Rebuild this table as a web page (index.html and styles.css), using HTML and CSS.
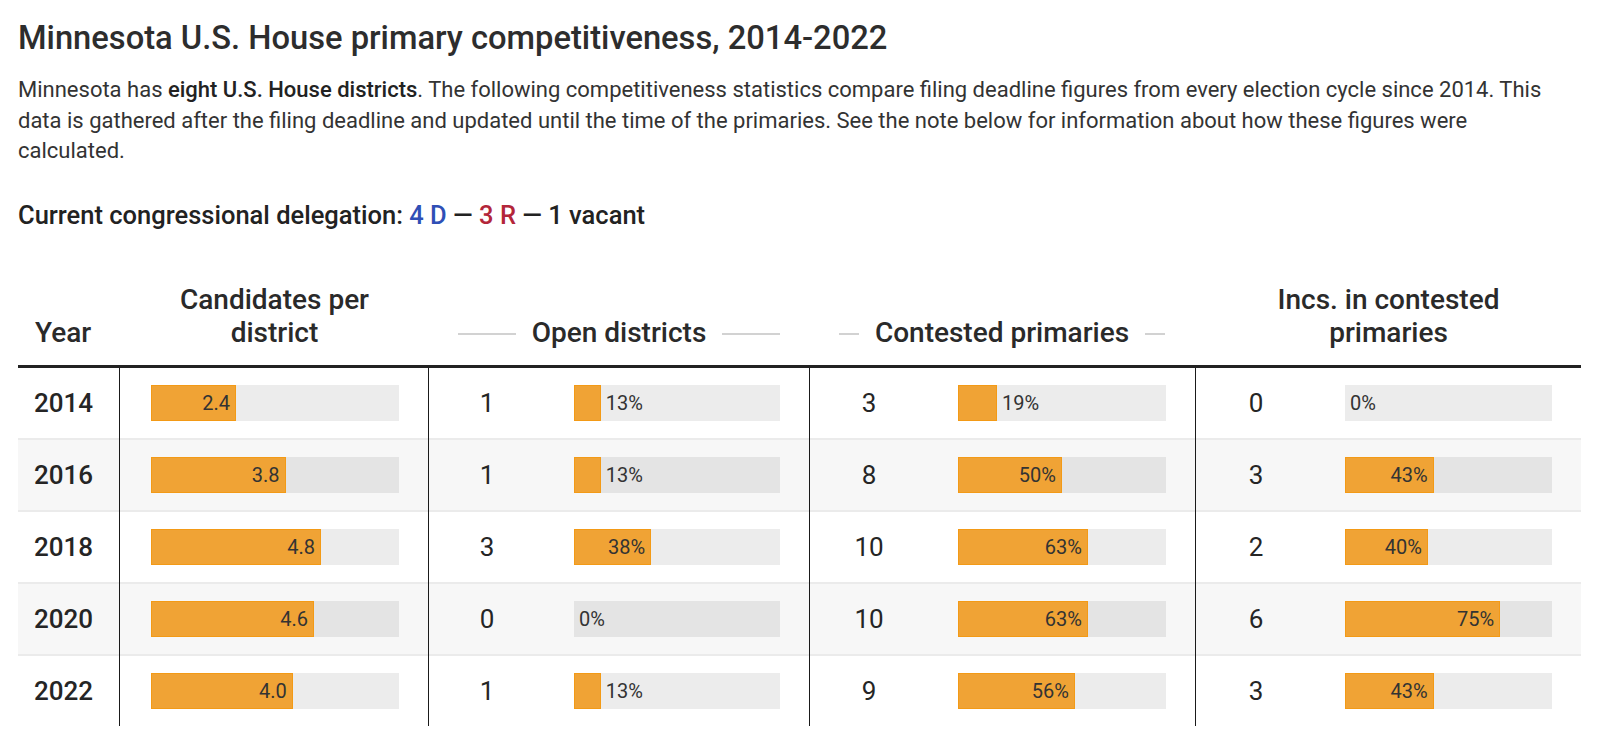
FILE: index.html
```html
<!DOCTYPE html>
<html lang="en">
<head>
<meta charset="utf-8">
<title>Minnesota U.S. House primary competitiveness</title>
<link rel="stylesheet" href="styles.css">
</head>
<body>
<main class="page">
  <h1 class="title">Minnesota U.S. House primary competitiveness, 2014-2022</h1>
  <p class="intro">Minnesota has <strong>eight U.S. House districts</strong>. The following competitiveness statistics compare filing deadline figures from every election cycle since 2014. This data is gathered after the filing deadline and updated until the time of the primaries. See the note below for information about how these figures were calculated.</p>
  <p class="delegation">Current congressional delegation: <span class="dem">4 D</span> — <span class="rep">3 R</span> — 1 vacant</p>

  <div class="table">
    <div class="thead">
      <div class="th th-year">Year</div>
      <div class="th th-center">Candidates per<br>district</div>
      <div class="th th-group th-open"><span class="rule"></span><span class="th-label">Open districts</span><span class="rule"></span></div>
      <div class="th th-group th-contested"><span class="rule"></span><span class="th-label">Contested primaries</span><span class="rule"></span></div>
      <div class="th th-center th-incs">Incs. in contested<br>primaries</div>
    </div>

    <div class="row">
      <div class="cell year">2014</div>
      <div class="cell bar-cell bar-cand"><div class="track"><div class="fill" style="width:34.29%"><span class="lbl">2.4</span></div></div></div>
      <div class="cell num">1</div>
      <div class="cell bar-cell bar-open"><div class="track"><div class="fill" style="width:13%"></div><span class="lbl out">13%</span></div></div>
      <div class="cell num">3</div>
      <div class="cell bar-cell bar-cont"><div class="track"><div class="fill" style="width:18.75%"></div><span class="lbl out">19%</span></div></div>
      <div class="cell num">0</div>
      <div class="cell bar-cell bar-incs last"><div class="track"><span class="lbl out">0%</span></div></div>
    </div>

    <div class="row alt">
      <div class="cell year">2016</div>
      <div class="cell bar-cell bar-cand"><div class="track"><div class="fill" style="width:54.29%"><span class="lbl">3.8</span></div></div></div>
      <div class="cell num">1</div>
      <div class="cell bar-cell bar-open"><div class="track"><div class="fill" style="width:13%"></div><span class="lbl out">13%</span></div></div>
      <div class="cell num">8</div>
      <div class="cell bar-cell bar-cont"><div class="track"><div class="fill" style="width:50%"><span class="lbl">50%</span></div></div></div>
      <div class="cell num">3</div>
      <div class="cell bar-cell bar-incs last"><div class="track"><div class="fill" style="width:42.86%"><span class="lbl">43%</span></div></div></div>
    </div>

    <div class="row">
      <div class="cell year">2018</div>
      <div class="cell bar-cell bar-cand"><div class="track"><div class="fill" style="width:68.57%"><span class="lbl">4.8</span></div></div></div>
      <div class="cell num">3</div>
      <div class="cell bar-cell bar-open"><div class="track"><div class="fill" style="width:37.5%"><span class="lbl">38%</span></div></div></div>
      <div class="cell num">10</div>
      <div class="cell bar-cell bar-cont"><div class="track"><div class="fill" style="width:62.5%"><span class="lbl">63%</span></div></div></div>
      <div class="cell num">2</div>
      <div class="cell bar-cell bar-incs last"><div class="track"><div class="fill" style="width:40%"><span class="lbl">40%</span></div></div></div>
    </div>

    <div class="row alt">
      <div class="cell year">2020</div>
      <div class="cell bar-cell bar-cand"><div class="track"><div class="fill" style="width:65.71%"><span class="lbl">4.6</span></div></div></div>
      <div class="cell num">0</div>
      <div class="cell bar-cell bar-open"><div class="track"><span class="lbl out">0%</span></div></div>
      <div class="cell num">10</div>
      <div class="cell bar-cell bar-cont"><div class="track"><div class="fill" style="width:62.5%"><span class="lbl">63%</span></div></div></div>
      <div class="cell num">6</div>
      <div class="cell bar-cell bar-incs last"><div class="track"><div class="fill" style="width:75%"><span class="lbl">75%</span></div></div></div>
    </div>

    <div class="row">
      <div class="cell year">2022</div>
      <div class="cell bar-cell bar-cand"><div class="track"><div class="fill" style="width:57.14%"><span class="lbl">4.0</span></div></div></div>
      <div class="cell num">1</div>
      <div class="cell bar-cell bar-open"><div class="track"><div class="fill" style="width:13%"></div><span class="lbl out">13%</span></div></div>
      <div class="cell num">9</div>
      <div class="cell bar-cell bar-cont"><div class="track"><div class="fill" style="width:56.25%"><span class="lbl">56%</span></div></div></div>
      <div class="cell num">3</div>
      <div class="cell bar-cell bar-incs last"><div class="track"><div class="fill" style="width:42.86%"><span class="lbl">43%</span></div></div></div>
    </div>
  </div>
</main>
</body>
</html>
```

FILE: styles.css
```css
* { box-sizing: border-box; }

html, body {
  margin: 0;
  padding: 0;
  background: #ffffff;
}

body {
  font-family: Roboto, "Liberation Sans", Arial, sans-serif;
  color: #333333;
}

.page {
  padding: 18px 19px 0 18px;
}

.title {
  margin: 0;
  font-size: 32.7px;
  line-height: 40px;
  font-weight: 500;
  color: #2d2d2d;
}

.intro {
  max-width: 1535px;
  margin: 17px 0 0 0;
  font-size: 22px;
  line-height: 30.5px;
  font-weight: 400;
  color: #333333;
}

.intro strong {
  font-weight: 500;
  color: #222222;
}

.delegation {
  margin: 33px 0 0 0;
  font-size: 25.5px;
  line-height: 30px;
  font-weight: 500;
  color: #222222;
}

.dem { color: #2f4fb6; }
.rep { color: #b3263a; }

.table {
  margin-top: 53px;
}

.thead,
.row {
  display: grid;
  grid-template-columns: 102px 309px 116px 265px 118px 268px 120px 265px;
}

.thead {
  align-items: end;
  padding-bottom: 16px;
  border-bottom: 3px solid #222222;
}

.th {
  font-size: 28px;
  line-height: 33px;
  font-weight: 500;
  color: #2a2a2a;
}

.th-year {
  padding-left: 17px;
}

.th-center {
  text-align: center;
}

.th-group {
  grid-column: span 2;
  display: flex;
  align-items: center;
  gap: 16px;
  padding: 0 30px 0 29px;
}

.th-contested {
  padding: 0 31px 0 29px;
}

.th-incs {
  grid-column: span 2;
}

.th-label {
  white-space: nowrap;
}

.rule {
  flex: 1;
  height: 2px;
  margin-top: 3px;
  background: #d2d2d2;
}

.row {
  height: 72px;
  box-shadow: inset 0 2px 0 #ebebeb;
}

.row:nth-child(2) {
  height: 70px;
  box-shadow: none;
}

.row.alt {
  background: #f7f7f7;
}

.cell {
  display: flex;
  align-items: center;
  padding-top: 2px;
}

.row:nth-child(2) .cell {
  padding-top: 0;
}

.year {
  padding-left: 16px;
  font-size: 26px;
  font-weight: 500;
  color: #252525;
  border-right: 1px solid #1a1a1a;
}

.num {
  justify-content: center;
  font-size: 26px;
  font-weight: 400;
  color: #252525;
}

.bar-cell {
  border-right: 1px solid #1a1a1a;
}

.bar-cell.last {
  border-right: none;
}

.bar-cand { padding-left: 31px; padding-right: 29px; }
.bar-open { padding-left: 29px; padding-right: 29px; }
.bar-cont { padding-left: 30px; padding-right: 29px; }
.bar-incs { padding-left: 29px; padding-right: 29px; }

.track {
  flex: 1;
  height: 36px;
  display: flex;
  align-items: center;
  background: rgba(0, 0, 0, 0.075);
}

.fill {
  height: 100%;
  display: flex;
  align-items: center;
  justify-content: flex-end;
  background: #f0a335;
  border: 1px solid #f39a16;
}

.lbl {
  font-size: 20px;
  line-height: 36px;
  color: #333333;
  padding-right: 5px;
  white-space: nowrap;
}

.lbl.out {
  padding-right: 0;
  padding-left: 5px;
}
```
